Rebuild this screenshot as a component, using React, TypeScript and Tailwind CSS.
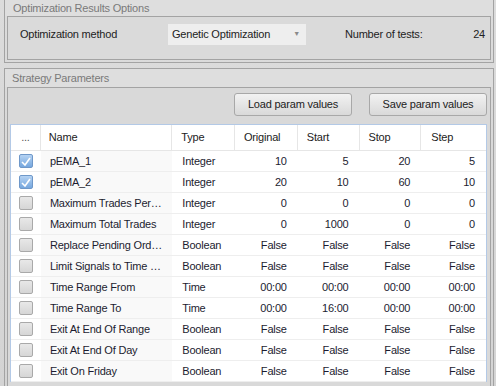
const ROWS = [
  { on: true, name: "pEMA_1", type: "Integer", v: ["10", "5", "20", "5"] },
  { on: true, name: "pEMA_2", type: "Integer", v: ["20", "10", "60", "10"] },
  { on: false, name: "Maximum Trades Per\u2026", type: "Integer", v: ["0", "0", "0", "0"] },
  { on: false, name: "Maximum Total Trades", type: "Integer", v: ["0", "1000", "0", "0"] },
  { on: false, name: "Replace Pending Ord\u2026", type: "Boolean", v: ["False", "False", "False", "False"] },
  { on: false, name: "Limit Signals to Time \u2026", type: "Boolean", v: ["False", "False", "False", "False"] },
  { on: false, name: "Time Range From", type: "Time", v: ["00:00", "00:00", "00:00", "00:00"] },
  { on: false, name: "Time Range To", type: "Time", v: ["00:00", "16:00", "00:00", "00:00"] },
  { on: false, name: "Exit At End Of Range", type: "Boolean", v: ["False", "False", "False", "False"] },
  { on: false, name: "Exit At End Of Day", type: "Boolean", v: ["False", "False", "False", "False"] },
  { on: false, name: "Exit On Friday", type: "Boolean", v: ["False", "False", "False", "False"] },
];

const VAL_COLS = ["w-[63px]", "w-[62px]", "w-[62px]", "w-[65px]"];

function Check({ on }: { on: boolean }) {
  if (on) {
    return (
      <div className="flex h-[14px] w-[14px] items-center justify-center rounded-[2px] border border-[#6f98c9] bg-gradient-to-b from-[#b5d3f3] to-[#76a7de]">
        <svg width="10" height="9" viewBox="0 0 10 9">
          <path d="M1 5 L4 8 L9 1" fill="none" stroke="#fff" strokeWidth="1.6" />
        </svg>
      </div>
    );
  }
  return <div className="h-[14px] w-[14px] rounded-[2px] border border-[#a9a9a9] bg-gradient-to-b from-[#e8e8e8] to-[#d6d6d6]" />;
}

function Button({ label }: { label: string }) {
  return (
    <button className="flex h-[23px] w-[118px] items-center justify-center rounded-[3px] border border-[#a8a8a8] bg-gradient-to-b from-[#f2f2f2] to-[#d9d9d9] text-[#222]">
      {label}
    </button>
  );
}

export default function App() {
  return (
    <div
      className="h-[386px] w-[496px] overflow-hidden bg-gradient-to-b from-[#dcdcdc] to-[#d4d4d4] text-[11px] tracking-[-0.2px] text-[#1c1c30]"
      style={{ fontFamily: '"Liberation Sans", Arial, sans-serif' }}
    >
      {/* Optimization results options */}
      <div className="ml-[4px] w-[490px] border-x border-b border-[#a3a3a3] pb-[2px]">
        <div className="flex h-[16px] items-center bg-[#dedede] pl-[8px] text-[#7a7a7a]">Optimization Results Options</div>
        <div className="mx-[2px] flex h-[44px] items-start border border-[#a3a3a3] bg-[#dadada] pt-[7px] pr-[4px] pl-[12px] text-[#222]">
          <div className="flex h-[21px] w-[148px] items-center">Optimization method</div>
          <div className="flex h-[21px] w-[138px] items-center justify-between bg-[#eeeeee] pr-[6px] pl-[4px]">
            <span>Genetic Optimization</span>
            <span className="text-[7px] text-[#8a8a8a]">{"\u25BC"}</span>
          </div>
          <div className="ml-[39px] flex h-[21px] items-center">Number of tests:</div>
          <div className="ml-auto flex h-[21px] items-center pr-[1px]">24</div>
        </div>
      </div>

      {/* Strategy parameters */}
      <div className="mt-[5px] ml-[4px] h-[330px] w-[490px] border border-[#a3a3a3]">
        <div className="flex h-[18px] items-center bg-[#dedede] pt-[1px] pl-[7px] text-[#7a7a7a]">Strategy Parameters</div>
        <div className="mx-[2px] h-[320px] border border-[#a3a3a3] bg-[#d9d9d9] px-[2px] pt-[5px]">
          <div className="flex justify-end gap-[17px] pr-[1px]">
            <Button label="Load param values" />
            <Button label="Save param values" />
          </div>
          <div className="mt-[8px] w-[477px] border-x border-t border-[#b3c9e6] bg-white">
            <div className="flex h-[26px] items-center border-b border-[#e6e6e6] text-[#222]">
              <div className="flex h-full w-[30px] items-center justify-center border-r border-[#e6e6e6] text-[#555]">...</div>
              <div className="flex h-full w-[132px] items-center border-r border-[#e6e6e6] pl-[8px]">Name</div>
              <div className="flex h-full w-[63px] items-center border-r border-[#e6e6e6] pl-[9px]">Type</div>
              <div className="flex h-full w-[63px] items-center border-r border-[#e6e6e6] pl-[9px]">Original</div>
              <div className="flex h-full w-[62px] items-center border-r border-[#e6e6e6] pl-[9px]">Start</div>
              <div className="flex h-full w-[62px] items-center border-r border-[#e6e6e6] pl-[9px]">Stop</div>
              <div className="flex h-full w-[65px] items-center pl-[10px]">Step</div>
            </div>
            {ROWS.map((r) => (
              <div key={r.name} className="flex h-[21px] items-center border-b border-[#eeeeee]">
                <div className="flex h-full w-[30px] items-center pl-[8px]">
                  <Check on={r.on} />
                </div>
                <div className="flex h-full w-[132px] items-center bg-[#f9f9f9] pl-[9px] whitespace-nowrap">{r.name}</div>
                <div className="flex h-full w-[63px] items-center pl-[10px]">{r.type}</div>
                {r.v.map((v, i) => (
                  <div key={i} className={`flex h-full items-center justify-end pr-[11px] ${VAL_COLS[i]}`}>
                    {v}
                  </div>
                ))}
              </div>
            ))}
          </div>
        </div>
      </div>
    </div>
  );
}
